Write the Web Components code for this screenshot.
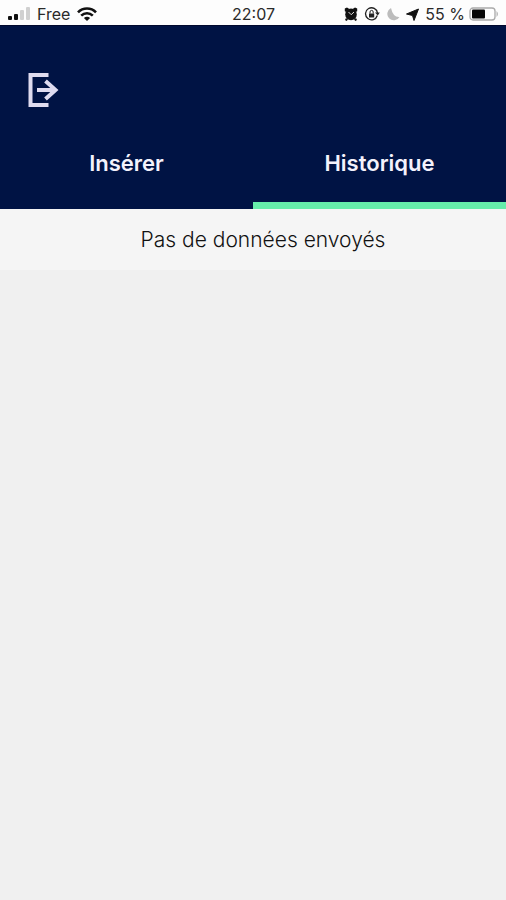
<!DOCTYPE html>
<html lang="fr">
<head>
<meta charset="utf-8">
<meta name="viewport" content="width=device-width, initial-scale=1">
<title>Historique</title>
<style>
  body { margin: 0; background: #f0f0f0; font-family: Inter, "Liberation Sans", sans-serif; }
</style>
</head>
<body>
<history-app></history-app>
<script>
class BaseElement extends HTMLElement {
  constructor() {
    super();
    this.attachShadow({ mode: 'open' }).innerHTML = this.constructor.markup;
  }
}

class StatusBar extends BaseElement {
  static markup = `
    <style>
      :host { display: grid; grid-template-columns: 1fr auto 1fr; align-items: center; height: 25px; padding: 2px 7px 0 8px; box-sizing: border-box; background: #fdfdfd; color: #2a2a2a; font-size: 16px; line-height: 24px; }
      div { display: flex; align-items: center; }
      svg { display: block; flex: none; }
      .left { gap: 7px; }
      .right { justify-content: flex-end; gap: 6px; }
      .power { gap: 4px; }
    </style>
    <div class="left">
      <svg width="22" height="14" viewBox="0 0 22 14" aria-hidden="true"><g fill="#111"><rect y="9" width="4" height="4" rx="1"/><rect x="6" y="7" width="4" height="6" rx="1"/></g><g fill="#d0d0d0"><rect x="12" y="3" width="4" height="10" rx="1"/><rect x="18" width="4" height="13" rx="1"/></g></svg>
      <span>Free</span>
      <svg width="20" height="14" viewBox="0 0 20 14" fill="none" stroke="#111" stroke-width="2.6" aria-hidden="true"><path d="M1 5.3C6 .2 14 .2 19 5.3M4.2 8.6c3.300-3.200 8.300-3.200 11.600 0"/><path d="M6.9 10.9c1.800-1.700 4.400-1.700 6.200 0L10 14z" fill="#111" stroke="none"/></svg>
    </div>
    <time>22:07</time>
    <div class="right">
      <svg width="14" height="14" viewBox="0 0 14 14" aria-hidden="true"><g fill="#111"><circle cx="7" cy="7.4" r="5.8"/><path d="M.8 4.200V1.500L3 .6l2.400 1.500L2.200 5zM13.200 4.200V1.500L11 .6 8.600 2.100 11.800 5zM2 11l2 1.500L2.600 14 1 13zM12 11l-2 1.500 1.400 1.500L13 13z"/></g><path d="m4.500 5 2.700 2.700L10 5" fill="none" stroke="#ddd"/></svg>
      <svg width="16" height="14" viewBox="0 0 16 14" fill="none" stroke="#222" aria-hidden="true"><path d="M13.300 8.500A6 6 0 1 1 13.500 6" stroke-width="1.300"/><path d="m11 5.500 2.800 3 2-3z" fill="#222" stroke="none"/><path d="M6 6.500V5a1.600 1.600 0 0 1 3.200 0v1.500"/><rect x="5" y="6.500" width="5.200" height="4" fill="#222" stroke="none"/></svg>
      <svg width="14" height="14" viewBox="0 0 14 14" aria-hidden="true"><path d="M5 1A6.500 6.500 0 1 0 13.500 10Q7 10.500 5 1z" fill="#bcbcbc"/></svg>
      <svg width="13" height="13" viewBox="0 0 13 13" aria-hidden="true"><path d="M12.500 1 8 12.500 6.500 7.500.5 6z" fill="#111" stroke="#111" stroke-linejoin="round"/></svg>
      <div class="power">
        <span>55 %</span>
        <svg width="30" height="14" viewBox="0 0 30 14" aria-hidden="true"><rect x="1" y="1" width="25" height="12" rx="3" fill="#fff" stroke="#aaa" stroke-width="1.300"/><rect x="3" y="2.500" width="13" height="9" rx="1" fill="#080808"/><path d="M27.500 4q3 3 0 6z" fill="#b5b5b5"/></svg>
      </div>
    </div>`;
}

class LogoutButton extends BaseElement {
  static markup = `
    <style>
      :host { display: flex; }
      button { display: block; padding: 0; border: 0; background: none; color: #dfdcf0; cursor: pointer; }
      svg { display: block; }
    </style>
    <button type="button" aria-label="Se déconnecter">
      <svg width="32" height="36" viewBox="0 0 32 36" fill="none" stroke="currentColor" stroke-width="4"><path d="M21.500 3H3.500v30h18M10 18h19M18.500 9 28.500 18l-10 9"/></svg>
    </button>`;
}

class TabItem extends BaseElement {
  static markup = `
    <style>
      :host { display: block; }
      button { display: block; width: 100%; height: 84px; box-sizing: border-box; padding: 0 0 1px; border: 0; border-bottom: 7px solid transparent; background: none; color: #f4f2fc; font: 600 22px/28px Inter, "Liberation Sans", sans-serif; cursor: pointer; }
      :host([selected]) button { border-bottom-color: #66edab; }
    </style>
    <button type="button" role="tab"><slot></slot></button>`;
  connectedCallback() {
    this.shadowRoot.querySelector('button').setAttribute('aria-selected', this.hasAttribute('selected'));
  }
}

class AppHeader extends BaseElement {
  static markup = `
    <style>
      :host { display: block; background: #001344; border-top: 1px solid #00082d; padding-top: 46px; }
      logout-button { padding: 0 27px 17px; }
      nav { display: grid; grid-template-columns: 1fr 1fr; }
    </style>
    <logout-button></logout-button>
    <nav role="tablist"><slot></slot></nav>`;
}

class EmptyMessage extends BaseElement {
  static markup = `
    <style>
      :host { display: block; padding: 17px 0 16px 20px; background: #f5f5f5; color: #111; font-size: 21px; font-weight: 300; line-height: 28px; text-align: center; }
      p { margin: 0; }
    </style>
    <p><slot></slot></p>`;
}

class HistoryApp extends BaseElement {
  static markup = `
    <style>:host { display: block; min-height: 100vh; }</style>
    <status-bar></status-bar>
    <app-header>
      <tab-item>Insérer</tab-item>
      <tab-item selected>Historique</tab-item>
    </app-header>
    <main><empty-message>Pas de données envoyés</empty-message></main>`;
}

customElements.define('status-bar', StatusBar);
customElements.define('logout-button', LogoutButton);
customElements.define('tab-item', TabItem);
customElements.define('app-header', AppHeader);
customElements.define('empty-message', EmptyMessage);
customElements.define('history-app', HistoryApp);
</script>
</body>
</html>
